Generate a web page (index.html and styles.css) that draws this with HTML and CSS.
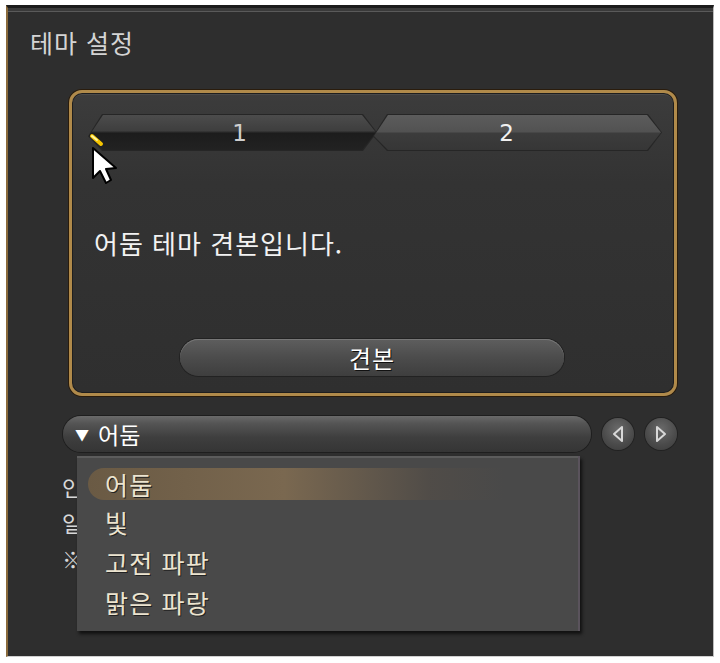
FILE: index.html
```html
<!DOCTYPE html>
<html lang="ko">
<head>
<meta charset="UTF-8">
<title>테마 설정</title>
<link rel="stylesheet" href="styles.css">
</head>
<body>

<div class="window">
  <h1 class="title">테마 설정</h1>

  <div class="card">
    <div class="tabs">
      <div class="tab active"><span>1</span></div>
      <div class="tab"><span>2</span></div>
    </div>

    <p class="sample">어둠 테마 견본입니다.</p>

    <div class="btn-row">
      <button class="pill-btn">견본</button>
    </div>

    <svg class="cursor" width="34" height="56" viewBox="0 0 34 56">
      <line x1="3" y1="3" x2="12" y2="11" stroke="#f5c400" stroke-width="4" stroke-linecap="round"/>
      <line x1="3" y1="3" x2="8" y2="7" stroke="#fff6a0" stroke-width="2" stroke-linecap="round"/>
      <path d="M4 15 L4 45 L11 38 L17 50 L22 47 L17 36 L27 35 Z" fill="#fff" stroke="#000" stroke-width="2" stroke-linejoin="round"/>
    </svg>
  </div>

  <div class="select-row">
    <div class="select">
      <span class="arrow">&#9660;</span>
      <span>어둠</span>
    </div>
    <button class="round-btn">
      <svg width="16" height="18" viewBox="0 0 16 18"><path d="M12 2 L4 9 L12 16 Z" fill="none" stroke="#d8d8d8" stroke-width="2" stroke-linejoin="round"/></svg>
    </button>
    <button class="round-btn">
      <svg width="16" height="18" viewBox="0 0 16 18"><path d="M4 2 L12 9 L4 16 Z" fill="none" stroke="#d8d8d8" stroke-width="2" stroke-linejoin="round"/></svg>
    </button>

    <ul class="menu">
      <li class="current">어둠</li>
      <li>빛</li>
      <li>고전 파판</li>
      <li>맑은 파랑</li>
    </ul>
  </div>

  <div class="notes">
    <p>인터페이스의 색상 테마를 변경합니다.</p>
    <p>일부 창에는 적용되지 않습니다.</p>
    <p>※ 변경 사항은 즉시 적용됩니다.</p>
  </div>
</div>

</body>
</html>
```

FILE: styles.css
```css
body {
    margin: 0;
    background: #fff;
    font-family: "Noto Sans CJK KR", "Noto Sans", sans-serif;
}

.window {
    margin: 5px 6px 0 6px;
    width: 708px;
    height: 652px;
    box-sizing: border-box;
    background: #2e2e2e;
    border-top: 3px solid #1c1c1c;
    border-left: 2px solid #8a6a3c;
    border-right: 1px solid #bcbcbc;
    border-bottom: 1px solid #d0d0d0;
    box-shadow: inset 0 3px 0 #3a3a3a, inset 0 4px 0 #5a5a5a;
    position: relative;
}

.title {
    margin: 0;
    padding: 18px 0 0 22px;
    font-size: 25px;
    font-weight: normal;
    letter-spacing: 1px;
    color: #d4d4d4;
    line-height: 32px;
    height: 62px;
    box-sizing: border-box;
}

.card {
    position: relative;
    margin: 20px 0 0 61px;
    width: 608px;
    height: 306px;
    box-sizing: border-box;
    border: 3px solid #b08a4a;
    border-radius: 13px;
    background: linear-gradient(#3c3c3c, #333 30%, #2f2f2f);
    box-shadow: 0 0 0 1px #2a1c0c, inset 0 0 0 1px #1e1e1e, inset 0 2px 0 #4a4a4a;
}

.tabs {
    display: flex;
    padding: 21px 0 0 16px;
}

.tab {
    width: 289px;
    height: 37px;
    clip-path: polygon(14px 0, calc(100% - 14px) 0, 100% 50%, calc(100% - 14px) 100%, 14px 100%, 0 60%);
    background: #262626;
    padding: 1px;
    box-sizing: border-box;
    margin-right: -4px;
}

.tab span {
    display: flex;
    align-items: center;
    justify-content: center;
    height: 100%;
    clip-path: polygon(14px 0, calc(100% - 14px) 0, 100% 50%, calc(100% - 14px) 100%, 14px 100%, 0 60%);
    background: linear-gradient(#5c5c5c, #525252 48%, #3c3c3c 52%, #363636);
    color: #f0f0f0;
    font-size: 23px;
    font-family: "DejaVu Sans", sans-serif;
    padding-right: 22px;
    box-sizing: border-box;
}

.tab.active span {
    background: linear-gradient(#4c4c4c, #3e3e3e 45%, #1c1c1c 52%, #222);
    color: #cfcfcf;
    padding-right: 0;
    padding-left: 14px;
}

.sample {
    margin: 76px 0 0 22px;
    font-size: 26px;
    letter-spacing: 1px;
    color: #f2f2f2;
    line-height: 32px;
}

.btn-row {
    margin: 80px 0 0 108px;
}

.pill-btn {
    width: 384px;
    height: 37px;
    border: none;
    border-radius: 19px;
    background: linear-gradient(#5e5e5e, #4c4c4c 50%, #3e3e3e);
    box-shadow: 0 0 0 1px #222, inset 0 1px 0 #777;
    color: #fff;
    font-family: inherit;
    font-size: 24px;
    line-height: 37px;
    letter-spacing: 1px;
    text-shadow: 1px 1px 0 #111;
    padding: 0;
}

.cursor {
    position: absolute;
    left: 17px;
    top: 40px;
}

.select-row {
    position: relative;
    display: flex;
    align-items: center;
    margin: 20px 0 0 55px;
    height: 36px;
}

.select {
    width: 528px;
    height: 36px;
    box-sizing: border-box;
    border-radius: 18px;
    background: linear-gradient(#6a6a6a, #555 20%, #3e3e3e 60%, #353535);
    box-shadow: 0 0 0 1px #1e1e1e;
    display: flex;
    align-items: center;
    padding-left: 12px;
    color: #fff;
    font-size: 23px;
}

.select .arrow {
    font-size: 14px;
    margin-right: 9px;
}

.round-btn {
    width: 32px;
    height: 32px;
    border-radius: 50%;
    border: none;
    padding: 0;
    margin-left: 11px;
    background: radial-gradient(circle at 50% 35%, #6a6a6a, #4a4a4a 60%, #3a3a3a);
    box-shadow: 0 0 0 1px #222;
    display: flex;
    align-items: center;
    justify-content: center;
}

.menu {
    position: absolute;
    left: 14px;
    top: 40px;
    width: 503px;
    height: 175px;
    margin: 0;
    padding: 9px 0 0 11px;
    box-sizing: border-box;
    list-style: none;
    background: #494949;
    border-right: 2px solid #5a535c;
    box-shadow: inset 0 2px 0 #5c5c5c, 2px 3px 3px #111;
    z-index: 2;
}

.menu li {
    height: 40px;
    line-height: 38px;
    padding-left: 17px;
    font-size: 25px;
    letter-spacing: 1.2px;
    color: #ece4d0;
    text-shadow: 1px 1px 0 #222;
}

.menu li.current {
    height: 32px;
    line-height: 32px;
    margin: 3px 0 3px;
    border-radius: 16px;
    background: linear-gradient(90deg, #6a5a44, #7a6850 40%, rgba(90, 80, 70, 0.4) 70%, rgba(73, 73, 73, 0) 85%);
}

.notes {
    margin: 16px 0 0 54px;
    color: #d8d8d8;
    font-size: 22px;
}

.notes p {
    margin: 0;
    line-height: 36px;
}
```
